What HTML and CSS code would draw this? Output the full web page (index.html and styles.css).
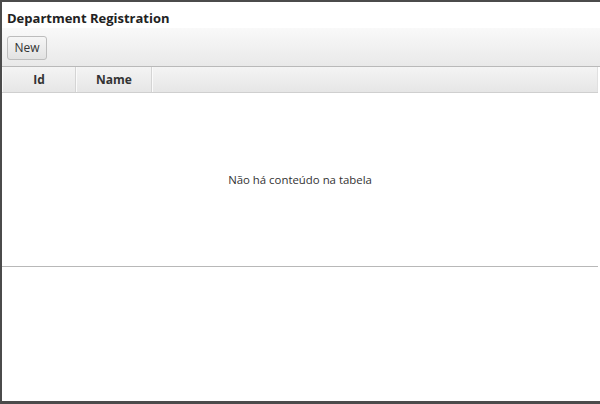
FILE: index.html
```html
<!DOCTYPE html>
<html>
<head>
<meta charset="utf-8">
<link rel="stylesheet" href="styles.css">
</head>
<body>
<div class="window">
  <div class="title">Department Registration</div>
  <div class="toolbar">
    <button class="btn">New</button>
  </div>
  <div class="table">
    <div class="thead">
      <div class="th th-id">Id</div>
      <div class="th th-name">Name</div>
      <div class="th th-fill"></div>
    </div>
    <div class="tbody">
      <span class="empty">Não há conteúdo na tabela</span>
    </div>
  </div>
  <div class="rest"></div>
</div>
</body>
</html>
```
FILE: styles.css
```css
html, body {
  margin: 0;
  padding: 0;
  background: #ffffff;
}
.window {
  box-sizing: border-box;
  width: 600px;
  height: 404px;
  border-top: 2px solid #4b4b4b;
  border-left: 2px solid #4b4b4b;
  border-bottom: 3px solid #4b4b4b;
  display: flex;
  flex-direction: column;
  font-family: "Open Sans", "Noto Sans", sans-serif;
  color: #333;
  background: #fff;
}
.title {
  height: 26px;
  box-sizing: border-box;
  padding: 7px 0 0 5px;
  font-size: 13px;
  font-weight: bold;
  color: #222;
  line-height: 18px;
}
.toolbar {
  height: 39px;
  box-sizing: border-box;
  border-bottom: 1px solid #b9b9b9;
  background: linear-gradient(#f9f9f9, #e9e9e9);
  padding: 7px 0 0 5px;
}
.btn {
  width: 40px;
  height: 24px;
  box-sizing: border-box;
  border: 1px solid #bdbdbd;
  border-radius: 3px;
  background: linear-gradient(#f6f6f6, #e2e2e2);
  font-family: "Open Sans", "Noto Sans", sans-serif;
  font-size: 12px;
  color: #333;
  padding: 0;
  margin: 0;
}
.table {
  display: flex;
  flex-direction: column;
  margin-right: 2px;
}
.thead {
  display: flex;
  height: 26px;
  box-sizing: border-box;
  border-bottom: 1px solid #cfcfcf;
  background: linear-gradient(#f4f4f4, #e6e6e6);
}
.th {
  box-sizing: border-box;
  font-size: 12px;
  font-weight: bold;
  color: #333;
  line-height: 26px;
  text-align: center;
  border-right: 1px solid #d4d4d4;
  border-left: 1px solid #fafafa;
}
.th-id { width: 74px; }
.th-name { width: 76px; }
.th-fill { flex: 1; border-right: 1px solid #e0e0e0; }
.tbody {
  height: 174px;
  box-sizing: border-box;
  border-bottom: 1px solid #b8b8b8;
  display: flex;
  align-items: center;
  justify-content: center;
}
.empty {
  font-size: 11.4px;
  color: #333;
}
.rest {
  flex: 1;
}
```
